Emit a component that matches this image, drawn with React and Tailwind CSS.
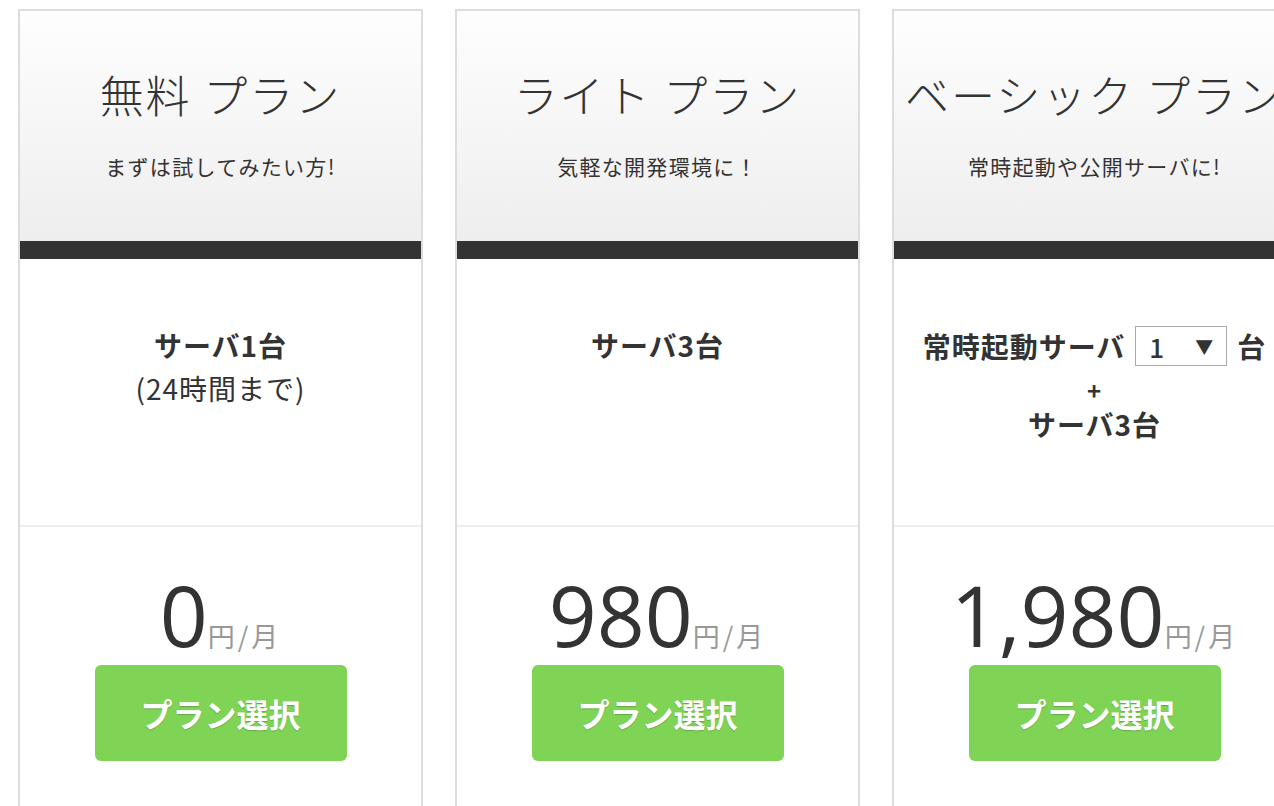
import React from "react";

const plans = [
  { name: "無料 プラン", tagline: "まずは試してみたい方!", price: "0", kind: "free" },
  { name: "ライト プラン", tagline: "気軽な開発環境に！", price: "980", kind: "light" },
  { name: "ベーシック プラン", tagline: "常時起動や公開サーバに!", price: "1,980", kind: "basic" },
];

const Servers = ({ kind }) => {
  if (kind === "free") {
    return (
      <div className="text-[28px] leading-[43px] tracking-[1px]">
        <p className="font-bold">サーバ1台</p>
        <p>(24時間まで)</p>
      </div>
    );
  }
  if (kind === "light") {
    return <p className="text-[28px] leading-[43px] tracking-[1px] font-bold">サーバ3台</p>;
  }
  return (
    <div className="text-[28px] font-bold tracking-[1px]">
      <div className="flex h-[44px] items-center justify-center">
        <span>常時起動サーバ</span>
        <div className="mx-[10px] flex h-[40px] w-[92px] items-center justify-between border border-[#aaa] bg-white pl-[13px] pr-[12px] font-medium">
          <span className="text-[26px]">1</span>
          <span className="text-[18px]">▼</span>
        </div>
        <span>台</span>
      </div>
      <p className="text-[24px] leading-[44px]">+</p>
      <p className="leading-[24px]">サーバ3台</p>
    </div>
  );
};

const PlanCard = ({ plan }) => {
  return (
    <div className="w-[405px] shrink-0 border-2 border-[#dddddd] bg-white">
      <div className="h-[230px] bg-linear-to-b from-[#fefefe] to-[#eeeeee] pt-[57px] text-center">
        <h2 className="whitespace-nowrap text-[44px] leading-[52px] font-light tracking-[2px]">{plan.name}</h2>
        <p className="mt-[31px] text-[21px] leading-[30px] tracking-[1.3px]">{plan.tagline}</p>
      </div>
      <div className="h-[18px] bg-[#333333]"></div>
      <div className="h-[268px] border-b-2 border-[#eeeeee] pt-[65px] text-center">
        <Servers kind={plan.kind} />
      </div>
      <div className="flex flex-col items-center pt-[46px] pb-[80px]">
        <div className="flex items-baseline leading-none">
          <span className="font-['Open_Sans',sans-serif] text-[84px] leading-none">{plan.price}</span>
          <span className="text-[27px] leading-none tracking-[3px] text-[#999999]">円/月</span>
        </div>
        <button className="mt-[8px] flex h-[96px] w-[252px] items-center justify-center rounded-md bg-[#80d455] text-[32px] font-bold text-white [text-shadow:0_1px_1px_rgba(0,0,0,0.2)]">
          プラン選択
        </button>
      </div>
    </div>
  );
};

const App = () => {
  return (
    <div className="h-[806px] w-full overflow-hidden bg-white font-['Noto_Sans_CJK_JP',sans-serif] text-[#333333]">
      <div className="flex gap-[32px] pl-[18px] pt-[9px]">
        {plans.map((plan) => (
          <PlanCard key={plan.kind} plan={plan} />
        ))}
      </div>
    </div>
  );
};

export default App;
